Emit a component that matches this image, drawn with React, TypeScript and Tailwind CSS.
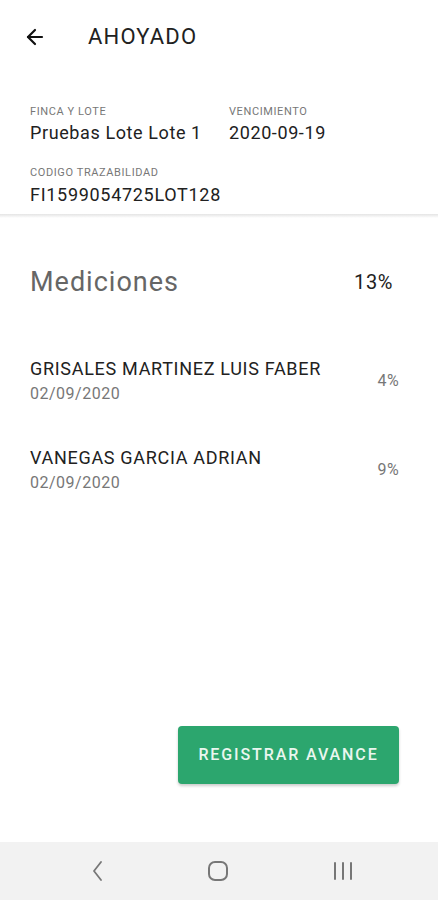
import { ArrowLeft } from "lucide-react";

const mediciones = [
  { name: "GRISALES MARTINEZ LUIS FABER", date: "02/09/2020", pct: "4%" },
  { name: "VANEGAS GARCIA ADRIAN", date: "02/09/2020", pct: "9%" },
];

export default function App() {
  return (
    <div className="min-h-[900px] flex flex-col bg-white font-['Roboto',sans-serif] text-[#212121]">
      {/* App bar */}
      <div className="h-[74px] flex items-center pl-[23px]">
        <ArrowLeft className="w-[24px] h-[24px] text-[#111]" strokeWidth={2.2} />
        <h1 className="ml-[41px] text-[22px] leading-none tracking-[1.2px]">AHOYADO</h1>
      </div>

      {/* Lot info */}
      <div className="px-[30px] pt-[30px] pb-[7px]">
        <div className="flex">
          <div className="w-[199px]">
            <div className="text-[11px] leading-[16px] tracking-[0.6px] text-[#777]">FINCA Y LOTE</div>
            <div className="mt-[1px] text-[18px] leading-[24px] tracking-[0.6px]">Pruebas Lote Lote 1</div>
          </div>
          <div>
            <div className="text-[11px] leading-[16px] tracking-[0.6px] text-[#777]">VENCIMIENTO</div>
            <div className="mt-[1px] text-[18px] leading-[24px] tracking-[0.6px]">2020-09-19</div>
          </div>
        </div>
        <div className="mt-[20px]">
          <div className="text-[11px] leading-[16px] tracking-[0.6px] text-[#777]">CODIGO TRAZABILIDAD</div>
          <div className="mt-[2px] text-[18px] leading-[24px] tracking-[0.7px]">FI1599054725LOT128</div>
        </div>
      </div>
      <div className="h-[4px] bg-gradient-to-b from-[#e4e4e4] to-white" />

      {/* Mediciones */}
      <div className="mt-[48px] pl-[30px] pr-[45px] flex items-center justify-between">
        <h2 className="text-[27px] leading-[32px] tracking-[1px] text-[#666]">Mediciones</h2>
        <span className="text-[20px] leading-[32px] tracking-[0.6px]">13%</span>
      </div>

      <div className="mt-[60px] pl-[30px] pr-[39px] flex flex-col gap-[42px]">
        {mediciones.map((m) => (
          <div key={m.name} className="flex items-center justify-between">
            <div>
              <div className="text-[18px] leading-[22px] tracking-[0.7px]">{m.name}</div>
              <div className="mt-[3px] text-[16px] leading-[22px] tracking-[0.5px] text-[#777]">{m.date}</div>
            </div>
            <span className="mb-[2px] text-[16px] leading-[22px] tracking-[0.4px] text-[#777]">{m.pct}</span>
          </div>
        ))}
      </div>

      <div className="flex-1" />

      {/* Action */}
      <div className="flex justify-end pr-[39px] mb-[58px]">
        <button className="w-[221px] h-[58px] rounded-[4px] bg-[#2ca66e] text-[#eaf6ef] text-[16px] font-medium tracking-[1.9px] shadow-[0_2px_3px_rgba(0,0,0,0.2)]">
          REGISTRAR AVANCE
        </button>
      </div>

      {/* System nav */}
      <div className="h-[58px] bg-[#f2f2f2] flex items-center pl-[88px]">
        <svg width="20" height="20" viewBox="0 0 20 20" fill="none" stroke="#777" strokeWidth="1.8" strokeLinecap="round" strokeLinejoin="round">
          <path d="M13 1 L6 10 L13 19" />
        </svg>
        <svg className="ml-[99px]" width="22" height="22" viewBox="0 0 22 22" fill="none" stroke="#777" strokeWidth="2">
          <rect x="2" y="2" width="18" height="18" rx="6" />
        </svg>
        <svg className="ml-[103px]" width="22" height="22" viewBox="0 0 22 22" fill="none" stroke="#777" strokeWidth="2" strokeLinecap="round">
          <path d="M3 3 V19 M11 3 V19 M19 3 V19" />
        </svg>
      </div>
    </div>
  );
}
